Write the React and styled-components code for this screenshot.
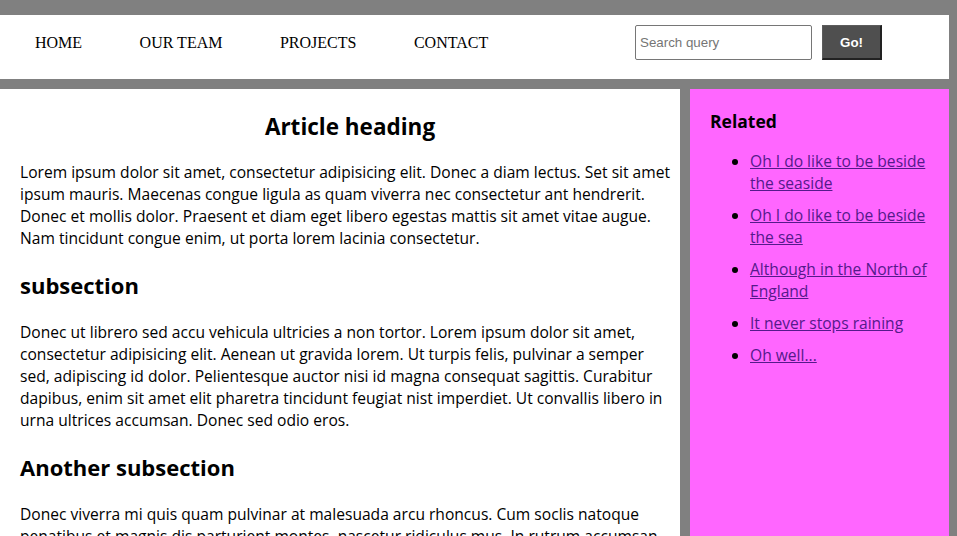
import React from 'react';
import styled, { createGlobalStyle } from 'styled-components';

const GlobalStyle = createGlobalStyle`
  html, body {
    margin: 0;
    padding: 0;
    background-color: #808080;
  }

  body {
    padding: 15px 8px 0 0;
    font-family: "Open Sans", "DejaVu Sans", sans-serif;
    overflow: hidden;
  }
`;

const Page = styled.div`
  width: 949px;
`;

const Header = styled.header`
  display: flex;
  align-items: center;
  justify-content: space-between;
  background-color: #fff;
  height: 64px;
  box-sizing: border-box;
  padding: 10px 67px 19px 35px;
`;

const Nav = styled.nav`
  display: flex;
  gap: 57.5px;
  padding-top: 1px;
`;

const NavLink = styled.a`
  font-family: "Liberation Serif", "Times New Roman", serif;
  font-size: 16px;
  color: #000;
  text-decoration: none;
`;

const SearchForm = styled.form`
  display: flex;
  gap: 10px;
`;

const SearchInput = styled.input`
  box-sizing: border-box;
  width: 177px;
  height: 35px;
  border: 1px solid #767676;
  border-radius: 2px;
  padding: 0 4px;
  font-family: "Liberation Sans", Arial, sans-serif;
  font-size: 13.33px;

  &::placeholder {
    color: #757575;
  }
`;

const GoButton = styled.button`
  box-sizing: border-box;
  width: 60px;
  height: 35px;
  background-color: #4f4f4f;
  color: #fff;
  border-style: solid;
  border-width: 1px 2px 2px 1px;
  border-color: #5c5c5c #222 #222 #5c5c5c;
  font-family: "Liberation Sans", Arial, sans-serif;
  font-size: 13.33px;
  font-weight: bold;
`;

const Body = styled.div`
  display: flex;
  gap: 10px;
  margin-top: 10px;
`;

const Main = styled.main`
  width: 680px;
  min-height: 460px;
  background-color: #fff;
  padding-left: 20px;
  box-sizing: border-box;
`;

const ArticleTitle = styled.h1`
  text-align: center;
  font-size: 22.5px;
  line-height: 28px;
  font-weight: bold;
  margin: 24px 0 20px;
`;

const SubHeading = styled.h2`
  font-size: 22px;
  line-height: 32px;
  margin: 20px 0;
`;

const Paragraph = styled.p`
  font-size: 15.6px;
  line-height: 22px;
  margin: 16px 6px 16px 0;
`;

const Aside = styled.aside`
  width: 259px;
  background-color: #ff66ff;
  padding: 0 10px 0 20px;
  box-sizing: border-box;
`;

const AsideTitle = styled.h2`
  font-size: 17.5px;
  line-height: 26px;
  margin: 19px 0 16px;
`;

const LinkList = styled.ul`
  margin: 0;
  padding-left: 40px;
`;

const LinkItem = styled.li`
  font-size: 15.6px;
  line-height: 22px;
  margin-bottom: 10px;
`;

const RelatedLink = styled.a`
  color: #551a8b;
  text-decoration: underline;
`;

const navItems = ['HOME', 'OUR TEAM', 'PROJECTS', 'CONTACT'];

const related = [
  'Oh I do like to be beside the seaside',
  'Oh I do like to be beside the sea',
  'Although in the North of England',
  'It never stops raining',
  'Oh well...',
];

const App = () => {
  return (
    <>
      <GlobalStyle />
      <Page>
        <Header>
          <Nav>
            {navItems.map((item) => (
              <NavLink key={item} href="#">
                {item}
              </NavLink>
            ))}
          </Nav>
          <SearchForm onSubmit={(e) => e.preventDefault()}>
            <SearchInput type="search" placeholder="Search query" />
            <GoButton type="submit">Go!</GoButton>
          </SearchForm>
        </Header>
        <Body>
          <Main>
            <ArticleTitle>Article heading</ArticleTitle>
            <Paragraph>
              Lorem ipsum dolor sit amet, consectetur adipisicing elit. Donec a diam lectus. Set sit amet
              ipsum mauris. Maecenas congue ligula as quam viverra nec consectetur ant hendrerit. Donec et
              mollis dolor. Praesent et diam eget libero egestas mattis sit amet vitae augue. Nam tincidunt
              congue enim, ut porta lorem lacinia consectetur.
            </Paragraph>
            <SubHeading>subsection</SubHeading>
            <Paragraph>
              Donec ut librero sed accu vehicula ultricies a non tortor. Lorem ipsum dolor sit amet,
              consectetur adipisicing elit. Aenean ut gravida lorem. Ut turpis felis, pulvinar a semper sed,
              adipiscing id dolor. Pelientesque auctor nisi id magna consequat sagittis. Curabitur dapibus,
              enim sit amet elit pharetra tincidunt feugiat nist imperdiet. Ut convallis libero in urna
              ultrices accumsan. Donec sed odio eros.
            </Paragraph>
            <SubHeading>Another subsection</SubHeading>
            <Paragraph>
              Donec viverra mi quis quam pulvinar at malesuada arcu rhoncus. Cum soclis natoque penatibus et
              magnis dis parturient montes, nascetur ridiculus mus. In rutrum accumsan ultricies. Mauris
              vitae nisi at sem facilisis semper ac in est.
            </Paragraph>
          </Main>
          <Aside>
            <AsideTitle>Related</AsideTitle>
            <LinkList>
              {related.map((text) => (
                <LinkItem key={text}>
                  <RelatedLink href="#">{text}</RelatedLink>
                </LinkItem>
              ))}
            </LinkList>
          </Aside>
        </Body>
      </Page>
    </>
  );
};

export default App;
